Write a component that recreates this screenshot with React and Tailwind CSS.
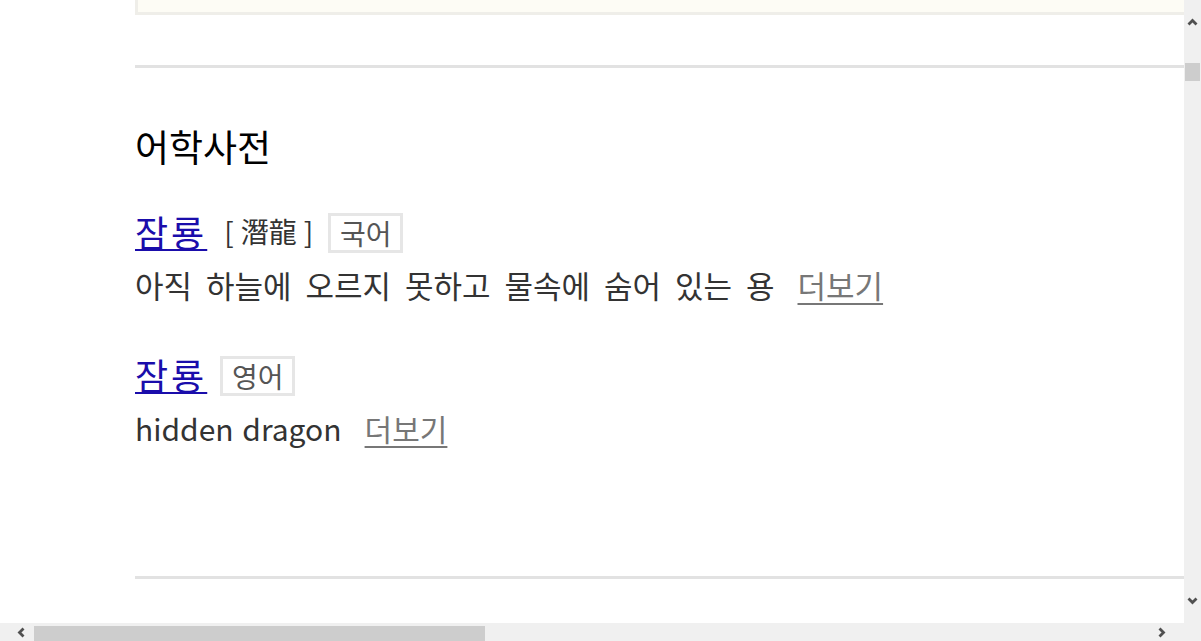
import React from "react";

const font = { fontFamily: '"Noto Sans CJK KR", "Noto Sans", sans-serif' };

function Chevron({ dir }) {
  const vert = dir === "up" || dir === "down";
  const pts = {
    up: "1.5,6.5 5.5,2.5 9.5,6.5",
    down: "1.5,1.5 5.5,5.5 9.5,1.5",
    left: "6.5,1.5 2.5,5.5 6.5,9.5",
    right: "1.5,1.5 5.5,5.5 1.5,9.5",
  };
  return (
    <svg
      width={vert ? 11 : 8}
      height={vert ? 8 : 11}
      viewBox={vert ? "0 0 11 8" : "0 0 8 11"}
      className="block shrink-0"
    >
      <polyline
        points={pts[dir]}
        fill="none"
        stroke="#505050"
        strokeWidth="2.8"
        strokeLinecap="butt"
        strokeLinejoin="miter"
      />
    </svg>
  );
}

function Tag({ children }) {
  return (
    <span className="h-[40px] w-[75px] border-[3px] border-[#e6e6e6] flex items-center justify-center text-[28px] leading-none text-[#555]">
      {children}
    </span>
  );
}

function More() {
  return (
    <a
      href="#"
      className="ml-[23px] text-[#777] underline decoration-2 underline-offset-[5px] [word-spacing:0px]"
    >
      더보기
    </a>
  );
}

export default function App() {
  return (
    <div
      className="w-[1201px] h-[641px] flex flex-col overflow-hidden bg-white"
      style={font}
    >
      <div className="flex flex-1 min-h-0">
        <div className="flex-1 min-w-0 overflow-hidden pl-[135px]">
          <div className="w-[1200px]">
            <div className="h-[15px] bg-[#fdfcf5] border-l-[3px] border-b-[3px] border-[#efeee9]" />
            <div className="mt-[50px] h-[3px] bg-[#e2e2e2]" />
            <h2 className="mt-[58px] h-[40px] leading-[40px] text-[37px] font-normal text-black">
              어학사전
            </h2>
            <div className="mt-[47px] h-[40px] flex items-center">
              <a
                href="#"
                className="text-[36px] leading-[40px] tracking-[3px] text-[#1a0dab] underline decoration-2 underline-offset-[2px] -mt-[5px]"
              >
                잠룡
              </a>
              <span className="ml-[17px] mr-[15px] text-[28px] leading-[40px] text-[#333] -mt-[4px] flex">
                <span>[</span>
                <span className="mx-[7px]">潛龍</span>
                <span>]</span>
              </span>
              <Tag>국어</Tag>
            </div>
            <div className="mt-[12px] h-[40px] flex items-center text-[31px] leading-[40px] text-[#333]">
              <span className="[word-spacing:7px]">
                아직 하늘에 오르지 못하고 물속에 숨어 있는 용
              </span>
              <More />
            </div>
            <div className="mt-[51px] h-[40px] flex items-center">
              <a
                href="#"
                className="text-[36px] leading-[40px] tracking-[3px] text-[#1a0dab] underline decoration-2 underline-offset-[2px] -mt-[5px]"
              >
                잠룡
              </a>
              <span className="ml-[13px]">
                <Tag>영어</Tag>
              </span>
            </div>
            <div className="mt-[12px] h-[40px] flex items-center text-[30px] leading-[40px] text-[#333]">
              <span className="[word-spacing:2px]">hidden dragon</span>
              <More />
            </div>
            <div className="mt-[128px] h-[3px] bg-[#e2e2e2]" />
          </div>
        </div>
        <div className="w-[17px] shrink-0 bg-[#f0f0f0] flex flex-col items-center">
          <div className="pt-[18px]">
            <Chevron dir="up" />
          </div>
          <div className="mt-[37px] w-[15px] h-[18px] bg-[#cdcdcd]" />
          <div className="flex-1" />
          <div className="pb-[18px]">
            <Chevron dir="down" />
          </div>
        </div>
      </div>
      <div className="h-[18px] shrink-0 flex bg-[#f0f0f0]">
        <div className="flex-1 flex items-center">
          <div className="ml-[17px]">
            <Chevron dir="left" />
          </div>
          <div className="ml-[9px] w-[451px] h-[15px] bg-[#cdcdcd] mt-[2px]" />
          <div className="flex-1" />
          <div className="mr-[18px]">
            <Chevron dir="right" />
          </div>
        </div>
        <div className="w-[17px] shrink-0" />
      </div>
    </div>
  );
}
